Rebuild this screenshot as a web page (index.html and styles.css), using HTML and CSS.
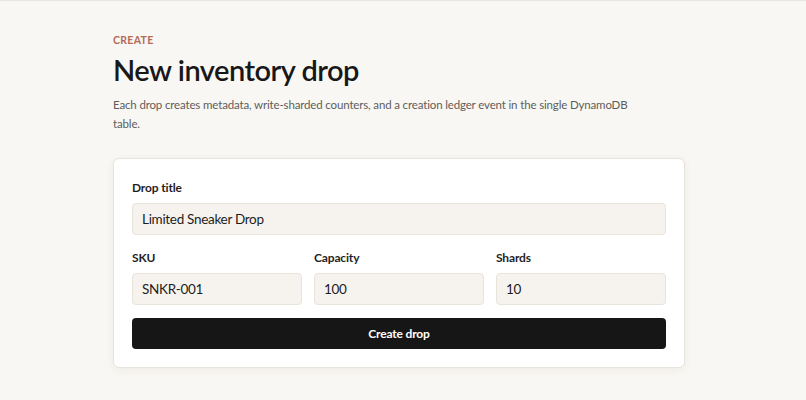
FILE: index.html
```html
<!DOCTYPE html>
<html lang="en">
<head>
<meta charset="utf-8">
<title>New inventory drop</title>
<link rel="stylesheet" href="styles.css">
</head>
<body>
<div class="topline"></div>
<main class="page">
  <p class="eyebrow">CREATE</p>
  <h1 class="title">New inventory drop</h1>
  <p class="lead">Each drop creates metadata, write-sharded counters, and a creation ledger event in the single DynamoDB table.</p>
  <form class="card">
    <label class="field">
      <span class="label">Drop title</span>
      <input class="input" type="text" value="Limited Sneaker Drop">
    </label>
    <div class="row">
      <label class="field">
        <span class="label">SKU</span>
        <input class="input" type="text" value="SNKR-001">
      </label>
      <label class="field">
        <span class="label">Capacity</span>
        <input class="input" type="text" value="100">
      </label>
      <label class="field">
        <span class="label">Shards</span>
        <input class="input" type="text" value="10">
      </label>
    </div>
    <button class="button" type="button">Create drop</button>
  </form>
</main>
</body>
</html>
```

FILE: styles.css
```css
html, body {
  margin: 0;
  padding: 0;
}
body {
  background: #f9f7f3;
  font-family: "Lato", "Open Sans", sans-serif;
  color: #1b1b1b;
  min-height: 450px;
}
.topline {
  height: 1px;
  background: #e9e6e1;
}
.page {
  width: 572px;
  margin: 0 auto;
  padding: 31px 8px 0 0;
  box-sizing: content-box;
}
.eyebrow {
  margin: 0;
  font-size: 10.5px;
  font-weight: 700;
  letter-spacing: 0.03em;
  line-height: 16px;
  color: #b36b57;
}
.title {
  margin: 2px 0 0;
  font-size: 29px;
  font-weight: 600;
  line-height: 40px;
  letter-spacing: -0.5px;
  color: #181818;
}
.lead {
  margin: 5px 0 0;
  max-width: 530px;
  font-size: 11.5px;
  line-height: 19px;
  letter-spacing: -0.15px;
  color: #5e5d5b;
}
.card {
  margin-top: 25px;
  background: #fff;
  border: 1px solid #e7e3dd;
  border-radius: 6px;
  box-shadow: 0 2px 8px rgba(60, 50, 40, 0.06);
  padding: 20px 18px 18px;
  display: flex;
  flex-direction: column;
  gap: 14px;
}
.field {
  display: flex;
  flex-direction: column;
  gap: 6px;
  min-width: 0;
}
.label {
  font-size: 12px;
  font-weight: 700;
  line-height: 18px;
  letter-spacing: -0.15px;
  color: #1f1f1f;
}
.row {
  display: grid;
  grid-template-columns: repeat(3, minmax(0, 1fr));
  gap: 12px;
}
.input {
  width: 100%;
  height: 32px;
  box-sizing: border-box;
  border: 1px solid #e8e3db;
  border-radius: 4px;
  background: #f6f3ee;
  padding: 0 9px;
  font-family: inherit;
  font-size: 13.5px;
  letter-spacing: -0.3px;
  color: #1d1d1d;
  outline: none;
}
.button {
  margin-top: -1px;
  height: 31px;
  border: 0;
  border-radius: 4px;
  background: #161616;
  color: #fff;
  font-family: inherit;
  font-size: 12px;
  font-weight: 700;
  letter-spacing: -0.15px;
}
```
